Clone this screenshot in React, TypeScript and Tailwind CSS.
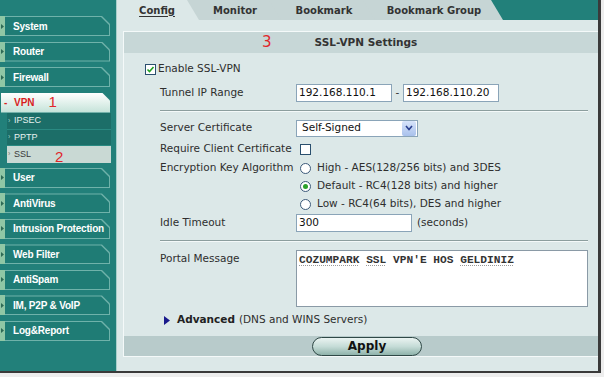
import React from 'react';

const navTop = ['System', 'Router', 'Firewall'];
const navBottom = ['User', 'AntiVirus', 'Intrusion Protection', 'Web Filter', 'AntiSpam', 'IM, P2P & VoIP', 'Log&Report'];

const notch = '[clip-path:polygon(0_0,calc(100%_-_8px)_0,100%_8px,100%_100%,0_100%)]';

const NavItem = ({ label }: { label: string }) => (
  <div className="flex h-[20px] items-stretch">
    <div className="w-[5px] bg-[#8fc7a5] flex items-center justify-center">
      <svg width="3" height="5" viewBox="0 0 3 5">
        <polygon points="0,0 3,2.5 0,5" fill="#2d6a55" />
      </svg>
    </div>
    <div className={`flex-1 mr-[6px] bg-[#6fb2aa] pt-[1px] pr-[1px] pb-[1px] ${notch}`}>
      <div className={`h-full bg-[#1f7c75] flex items-center pl-[8px] text-white font-bold text-[10px] tracking-[-0.2px] whitespace-nowrap font-['Liberation_Sans',Arial,sans-serif] ${notch}`}>
        {label}
      </div>
    </div>
  </div>
);

const Sidebar = () => (
  <div className="w-[117px] shrink-0 bg-[#22807a] border-r border-[#a9cfcb] pt-[16px] flex flex-col">
    <div className="flex flex-col gap-[5.5px]">
      {navTop.map((l) => (
        <NavItem key={l} label={l} />
      ))}
      <div className="flex h-[20px] items-stretch">
        <div className={`flex-1 mr-[6px] ml-[1px] bg-gradient-to-b from-white to-[#c3e2d8] flex items-center text-[#d81e1e] font-bold text-[10px] font-['Liberation_Sans',Arial,sans-serif] ${notch}`}>
          <span className="w-[13px] pl-[3px]">-</span>
          <span>VPN</span>
          <span className="ml-[14px] font-normal text-[15px] text-[#e0262a]">1</span>
        </div>
      </div>
    </div>
    <div className="mt-[0.5px] ml-[7px] mr-[5px] bg-[#1c6e68] flex flex-col text-[9px] font-['Liberation_Sans',Arial,sans-serif]">
      {['IPSEC', 'PPTP'].map((s) => (
        <div key={s} className="h-[16.7px] flex items-center text-[#e6f2f0] border-b border-[#2a8a82]">
          <span className="w-[7px] text-[7px] text-[#9fcfc4] pl-[1px]">›</span>
          {s}
        </div>
      ))}
      <div className="h-[16.6px] flex items-center bg-[#c9d9d4] text-[#3a3a3a]">
        <span className="w-[7px] text-[7px] text-[#777] pl-[1px]">›</span>
        SSL
        <span className="ml-[24px] text-[15px] text-[#e0262a] leading-none mt-[4px]">2</span>
      </div>
    </div>
    <div className="mt-[5px] flex flex-col gap-[5.5px]">
      {navBottom.map((l) => (
        <NavItem key={l} label={l} />
      ))}
    </div>
  </div>
);

const tabs = [
  { label: 'Config', w: 'w-[82px]', pad: 'pr-[2px]', z: 'z-40', bg: 'bg-[#dce8e8]', active: true },
  { label: 'Monitor', w: 'w-[94px]', pad: 'pl-[2px]', z: 'z-30', bg: 'bg-[#c6d5d5]' },
  { label: 'Bookmark', w: 'w-[106px]', pad: 'pl-[4px]', z: 'z-20', bg: 'bg-[#c6d5d5]' },
  { label: 'Bookmark Group', w: 'w-[140px]', pad: 'pl-[2px]', z: 'z-10', bg: 'bg-[#c6d5d5]' },
];

const Checkbox = ({ checked }: { checked?: boolean }) => (
  <div className="w-[11px] h-[11px] border border-[#2a4f6e] bg-white flex items-center justify-center">
    {checked && (
      <svg width="9" height="9" viewBox="0 0 9 9">
        <path d="M1.5 4.5 L3.5 6.5 L7.5 2" stroke="#21a121" strokeWidth="1.6" fill="none" />
      </svg>
    )}
  </div>
);

const Radio = ({ checked }: { checked?: boolean }) => (
  <div className="w-[11px] h-[11px] rounded-full border border-[#3c5a7a] bg-white flex items-center justify-center">
    {checked && <div className="w-[5px] h-[5px] rounded-full bg-[#2ba12b]" />}
  </div>
);

const label = 'w-[136px] shrink-0';
const input = 'h-[18px] bg-white border border-[#8aa4b8] flex items-center pl-[2px] text-[#111]';

const Main = () => (
  <div className="flex-1 flex flex-col">
    <div className="h-[20px] flex bg-[#22807a]">
      {tabs.map((t) => (
        <div
          key={t.label}
          className={`relative ${t.z} ${t.w} ${t.pad} ${t.bg} -mr-[12px] h-full flex items-center justify-center font-bold text-[10px] text-[#333] [clip-path:polygon(0_0,calc(100%_-_12px)_0,100%_100%,0_100%)]`}
        >
          <span className={t.active ? 'underline underline-offset-2' : ''}>{t.label}</span>
        </div>
      ))}
    </div>
    <div className="flex-1 bg-[#dce8e8] pt-[11px] pl-[6px]">
      <div className="border-l border-t border-b border-[#f4f9f9] flex flex-col text-[10.5px] text-[#2e2e2e]">
        <div className="h-[21px] bg-[#c7d7d7] flex items-center pl-[138px]">
          <span className="text-[15px] text-[#e0262a] leading-none">3</span>
          <span className="ml-[43px] font-bold text-[10.5px] text-[#333]">SSL-VPN Settings</span>
        </div>

        <div className="mt-[7px] h-[18px] flex items-center pl-[21px]">
          <Checkbox checked />
          <span className="ml-[2px]">Enable SSL-VPN</span>
        </div>

        <div className="mt-[6px] h-[18px] flex items-center pl-[36px]">
          <span className={label}>Tunnel IP Range</span>
          <div className={`${input} w-[96px]`}>192.168.110.1</div>
          <span className="w-[11px] text-center">-</span>
          <div className={`${input} w-[96px]`}>192.168.110.20</div>
        </div>

        <div className="mt-[8px] ml-[36px] mr-[10px] h-[1px] bg-[#8c9e9e] border-b border-[#f4f9f9] box-content" />

        <div className="mt-[7px] h-[18px] flex items-center pl-[36px]">
          <span className={label}>Server Certificate</span>
          <div className="h-[17px] w-[122px] bg-white border border-[#8aa4b8] flex items-center">
            <span className="flex-1 pl-[5px] text-[#111]">Self-Signed</span>
            <div className="w-[14px] h-[15px] mr-[1px] rounded-[2px] bg-gradient-to-b from-[#d8e4fa] to-[#a9c1ec] flex items-center justify-center">
              <svg width="8" height="6" viewBox="0 0 8 6">
                <path d="M1 1 L4 4.5 L7 1" stroke="#2a3f8f" strokeWidth="1.6" fill="none" />
              </svg>
            </div>
          </div>
        </div>

        <div className="mt-[3px] h-[18px] flex items-center pl-[36px]">
          <span className={label}>Require Client Certificate</span>
          <div className="ml-[4px]">
            <Checkbox />
          </div>
        </div>

        <div className="mt-[1px] flex pl-[36px]">
          <span className={`${label} h-[18px] flex items-center`}>Encryption Key Algorithm</span>
          <div className="flex flex-col pl-[4px]">
            {[
              ['High - AES(128/256 bits) and 3DES', false],
              ['Default - RC4(128 bits) and higher', true],
              ['Low - RC4(64 bits), DES and higher', false],
            ].map(([t, c]) => (
              <div key={t as string} className="h-[18px] flex items-center">
                <Radio checked={c as boolean} />
                <span className="ml-[6px]">{t as string}</span>
              </div>
            ))}
          </div>
        </div>

        <div className="mt-[1px] h-[18px] flex items-center pl-[36px]">
          <span className={label}>Idle Timeout</span>
          <div className={`${input} w-[116px]`}>300</div>
          <span className="ml-[5px]">(seconds)</span>
        </div>

        <div className="mt-[8px] ml-[36px] mr-[10px] h-[1px] bg-[#8c9e9e] border-b border-[#f4f9f9] box-content" />

        <div className="mt-[8px] flex pl-[36px]">
          <span className={`${label} pt-[1px]`}>Portal Message</span>
          <div className="w-[292px] h-[57px] bg-white border border-[#8a9aa6] pl-[2px] pt-[2px] font-['Liberation_Mono','Courier_New',monospace] text-[11.2px] font-bold text-[#333] leading-[14px] whitespace-pre">
            <span className="underline decoration-dotted decoration-[#999] underline-offset-2">COZUMPARK</span>{' '}
            <span className="underline decoration-dotted decoration-[#999] underline-offset-2">SSL</span> VPN'E HOS{' '}
            <span className="underline decoration-dotted decoration-[#999] underline-offset-2">GELDINIZ</span>
          </div>
        </div>

        <div className="mt-[5px] h-[16px] flex items-center pl-[40px]">
          <svg width="6" height="9" viewBox="0 0 6 9">
            <polygon points="0,0 6,4.5 0,9" fill="#1a1a8c" />
          </svg>
          <span className="ml-[7px] font-bold text-[#222]">Advanced</span>
          <span className="ml-[4px]">(DNS and WINS Servers)</span>
        </div>

        <div className="mt-[8px] h-[20px] bg-[#b8cbcb] flex items-center pl-[188px]">
          <div className="w-[110px] h-[19px] rounded-full border border-[#2f4846] bg-gradient-to-b from-[#eaf3f1] via-[#c5dcd7] to-[#8fb3ab] flex items-center justify-center font-bold text-[12px] text-[#111]">
            Apply
          </div>
        </div>
      </div>
    </div>
  </div>
);

export default function App() {
  return (
    <div className="w-[604px] h-[377px] bg-[#ededed] font-['DejaVu_Sans',Verdana,sans-serif]">
      <div className="flex w-[601px] h-[373px] border-r-[3px] border-b-[2px] border-[#3a3a3a]">
        <Sidebar />
        <Main />
      </div>
    </div>
  );
}
